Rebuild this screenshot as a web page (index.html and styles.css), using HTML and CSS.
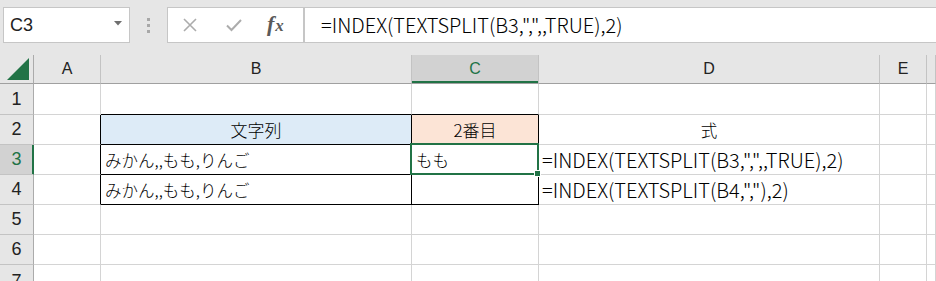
FILE: index.html
```html
<html>
	<head>
		<link rel="stylesheet" href="styles.css">
	</head>
	<body>
		<div class="toolbar">
  <div class="name-box">
    <span class="name">C3</span>
    <svg class="drop" width="8" height="5" viewBox="0 0 8 5"><path d="M0 0H8L4 4.5Z" fill="#6f6f6f"/></svg>
  </div>
  <div class="grip"><i></i><i></i><i></i></div>
  <div class="fx-buttons">
    <svg width="16" height="16" viewBox="0 0 16 16"><path d="M2 2L14 14M14 2L2 14" stroke="#acacac" stroke-width="1.6" fill="none"/></svg>
    <svg width="18" height="16" viewBox="0 0 18 16"><path d="M2 8.5L6.5 13L16 3" stroke="#acacac" stroke-width="2" fill="none"/></svg>
    <span class="fx"><i>f</i><i class="x">x</i></span>
  </div>
  <div class="formula">=INDEX(TEXTSPLIT(B3,",",,TRUE),2)</div>
</div>

<div class="sheet">
  <!-- header row -->
  <div class="cell corner">
    <svg width="23" height="23" viewBox="0 0 23 23"><path d="M22 0V22H0Z" fill="#217346"/></svg>
  </div>
  <div class="cell col-head">A</div>
  <div class="cell col-head">B</div>
  <div class="cell col-head active">C</div>
  <div class="cell col-head">D</div>
  <div class="cell col-head">E</div>
  <div class="cell col-head"></div>

  <!-- row 1 -->
  <div class="cell row-head">1</div>
  <div class="cell"></div>
  <div class="cell edge-b"></div>
  <div class="cell edge-b"></div>
  <div class="cell"></div>
  <div class="cell"></div>
  <div class="cell"></div>

  <!-- row 2 -->
  <div class="cell row-head">2</div>
  <div class="cell edge-r"></div>
  <div class="cell boxed center blue">文字列</div>
  <div class="cell boxed center peach">2番目</div>
  <div class="cell center">式</div>
  <div class="cell"></div>
  <div class="cell"></div>

  <!-- row 3 -->
  <div class="cell row-head active">3</div>
  <div class="cell edge-r"></div>
  <div class="cell boxed">みかん,,もも,りんご</div>
  <div class="cell boxed selected">もも</div>
  <div class="cell formula-text">=INDEX(TEXTSPLIT(B3,",",,TRUE),2)</div>
  <div class="cell"></div>
  <div class="cell"></div>

  <!-- row 4 -->
  <div class="cell row-head">4</div>
  <div class="cell edge-r"></div>
  <div class="cell boxed">みかん,,もも,りんご</div>
  <div class="cell boxed"></div>
  <div class="cell formula-text">=INDEX(TEXTSPLIT(B4,","),2)</div>
  <div class="cell"></div>
  <div class="cell"></div>

  <!-- rows 5-7 -->
  <div class="cell row-head">5</div>
  <div class="cell"></div><div class="cell"></div><div class="cell"></div>
  <div class="cell"></div><div class="cell"></div><div class="cell"></div>

  <div class="cell row-head">6</div>
  <div class="cell"></div><div class="cell"></div><div class="cell"></div>
  <div class="cell"></div><div class="cell"></div><div class="cell"></div>

  <div class="cell row-head last">7</div>
  <div class="cell"></div><div class="cell"></div><div class="cell"></div>
  <div class="cell"></div><div class="cell"></div><div class="cell"></div>
</div>
	</body>

</html>
```

FILE: styles.css
```css
body {
  margin: 0;
  overflow: hidden;
  background: #e6e6e6;
  font-family: "Noto Sans CJK JP", sans-serif;
  font-weight: 300;
  color: #000;
}

/* formula bar */

.toolbar {
  display: flex;
  align-items: flex-start;
  box-sizing: border-box;
  height: 55px;
  padding: 7px 0 0 3px;
}

.name-box,
.fx-buttons,
.formula {
  box-sizing: border-box;
  height: 36px;
  background: #fff;
  border: 1px solid #c6c6c6;
}

.name-box {
  display: flex;
  align-items: center;
  justify-content: space-between;
  width: 127px;
  padding: 0 7px 0 6px;
}

.name {
  font-family: "Liberation Sans", sans-serif;
  font-size: 18px;
  color: #222;
}

.drop {
  margin-top: -4px;
}

.grip {
  display: flex;
  flex-direction: column;
  align-items: center;
  gap: 3px;
  width: 37px;
  padding-top: 11px;
}

.grip i {
  width: 3px;
  height: 3px;
  background: #a8a8a8;
}

.fx-buttons {
  display: flex;
  align-items: center;
  width: 137px;
  padding-left: 14px;
  gap: 27px;
}

.fx {
  font-family: "Liberation Serif", serif;
  font-size: 22px;
  font-weight: bold;
  color: #5a5a5a;
  margin: -3px 0 0 -3px;
}

.fx .x {
  font-size: 17px;
  margin-left: 1px;
}

.formula {
  flex: 1;
  border-right: none;
  padding-left: 16px;
  line-height: 34px;
  font-size: 20px;
  white-space: nowrap;
}

/* grid */

.sheet {
  display: grid;
  grid-template-columns: 34px 67px 311px 127px 341px 47px 1fr;
  grid-template-rows: 29px 31px repeat(5, 30px);
  background: #fff;
}

.cell {
  display: flex;
  align-items: center;
  box-sizing: border-box;
  position: relative;
  padding-left: 4px;
  border-right: 1px solid #d4d4d4;
  border-bottom: 1px solid #d4d4d4;
  font-size: 16.5px;
  white-space: nowrap;
}

.corner,
.col-head,
.row-head {
  justify-content: center;
  padding: 0;
  background: #e6e6e6;
  color: #222;
  font-family: "Liberation Sans", sans-serif;
  font-weight: normal;
}

.corner {
  align-items: flex-end;
  justify-content: flex-end;
  padding: 0 3px 2px 0;
  border-right-color: #ababab;
  border-bottom-color: #a0a0a0;
}

.col-head {
  font-size: 16px;
  border-right-color: #c3c3c3;
  border-bottom-color: #a0a0a0;
}

.row-head {
  font-size: 18px;
  border-right-color: #ababab;
  border-bottom-color: #c3c3c3;
}

.row-head.last {
  align-items: flex-start;
  padding-top: 6px;
}

.col-head.active {
  background: #d2d2d2;
  color: #217346;
  box-shadow: inset 0 -2px 0 #217346;
}

.row-head.active {
  background: #d2d2d2;
  color: #217346;
  box-shadow: inset -1px 0 0 #217346;
  border-right-color: #217346;
}

.center {
  justify-content: center;
  padding-left: 0;
}

.blue,
.peach {
  font-size: 17px;
}

.edge-b {
  border-bottom-color: #000;
}

.edge-r {
  border-right-color: #000;
}

.boxed {
  border-right-color: #000;
  border-bottom-color: #000;
}

.blue {
  background: #ddebf7;
}

.peach {
  background: #fce4d6;
}

.formula-text {
  padding-left: 3px;
  font-size: 20px;
}

/* active cell outline and fill handle */
.selected::after {
  content: "";
  position: absolute;
  top: -2px;
  left: -2px;
  right: -1px;
  bottom: -1px;
  border: 2px solid #217346;
}

.selected::before {
  content: "";
  position: absolute;
  right: -3px;
  bottom: -3px;
  width: 5px;
  height: 5px;
  background: #217346;
  border: 1px solid #fff;
  z-index: 1;
}
```
